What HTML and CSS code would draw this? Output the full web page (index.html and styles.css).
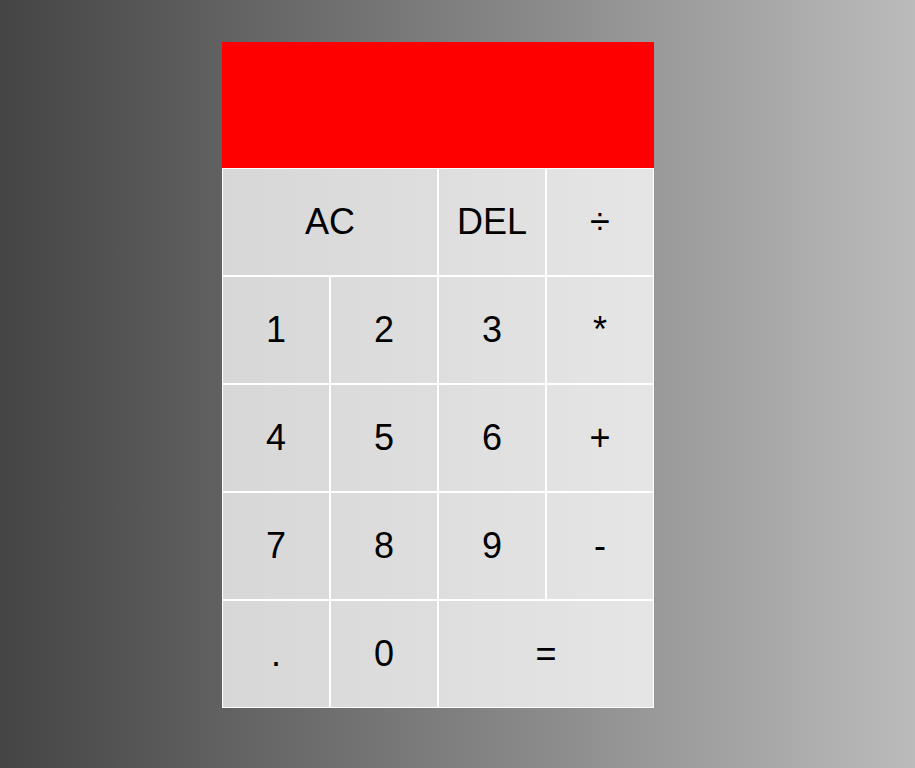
FILE: index.html
```html
<!DOCTYPE html>
<html>
<head>
<meta charset="utf-8">
<link rel="stylesheet" href="styles.css">
</head>
<body>
<div class="calculator">
  <div class="output"></div>
  <button class="span-two">AC</button>
  <button>DEL</button>
  <button>÷</button>
  <button>1</button>
  <button>2</button>
  <button>3</button>
  <button>*</button>
  <button>4</button>
  <button>5</button>
  <button>6</button>
  <button>+</button>
  <button>7</button>
  <button>8</button>
  <button>9</button>
  <button>-</button>
  <button>.</button>
  <button>0</button>
  <button class="span-two">=</button>
</div>
</body>
</html>
```
FILE: styles.css
```css
* { box-sizing: border-box; }
html, body { margin: 0; height: 100%; }
body {
  background: linear-gradient(to right, #444444, #bbbbbb);
  padding: 42px 0 0 222px;
  font-family: "Liberation Sans", Arial, sans-serif;
}
.calculator {
  display: grid;
  grid-template-columns: repeat(4, 108px);
  grid-template-rows: 126px repeat(5, 108px);
  width: 432px;
}
.output {
  grid-column: 1 / -1;
  background: #ff0000;
}
.calculator button {
  font-family: "Liberation Sans", Arial, sans-serif;
  font-size: 36px;
  color: #000;
  border: 1px solid #fff;
  background-color: rgba(255, 255, 255, 0.75);
  outline: none;
  cursor: pointer;
  padding: 0;
  margin: 0;
}
.span-two { grid-column: span 2; }
```
